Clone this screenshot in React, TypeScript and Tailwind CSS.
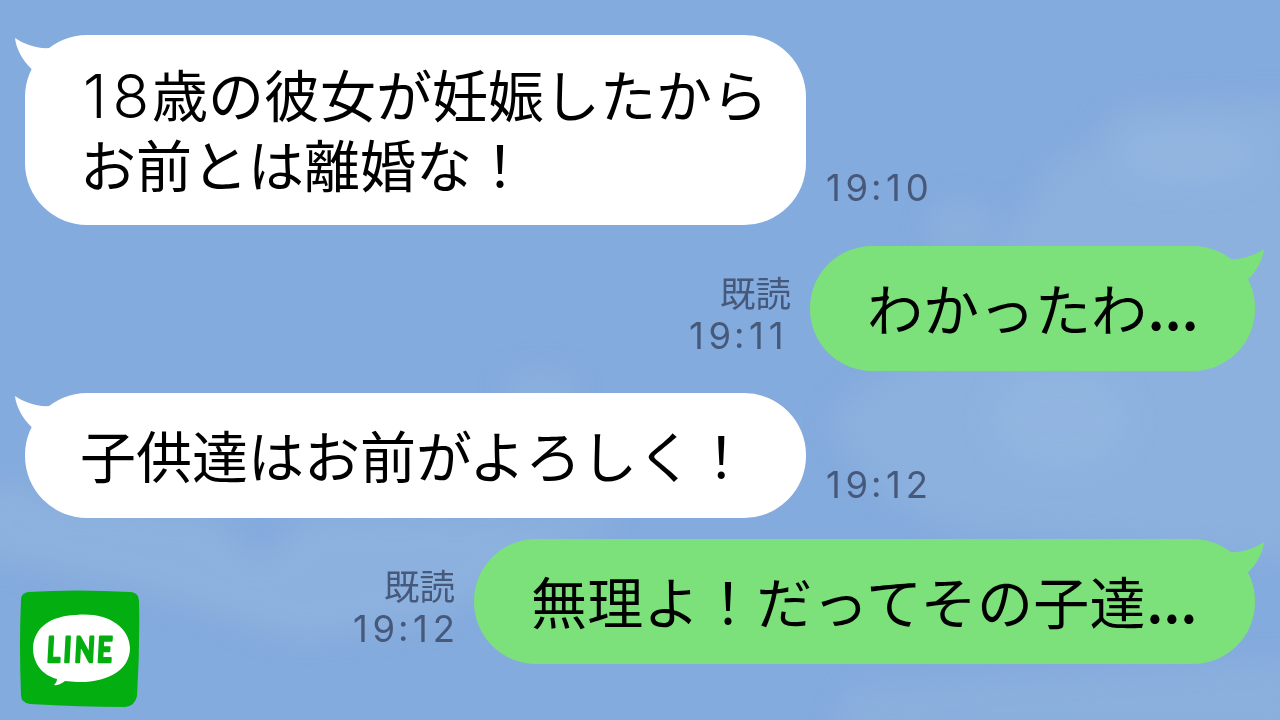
type Message = {
  mine?: boolean
  lines: string[]
  time: string
  size: string
  meta: string
}

const messages: Message[] = [
  {
    lines: ['18歳の彼女が妊娠したから', 'お前とは離婚な！'],
    time: '19:10',
    size: 'w-[781px] h-[190px]',
    meta: 'ml-5 pb-4',
  },
  {
    mine: true,
    lines: ['わかったわ...'],
    time: '19:11',
    size: 'mt-[21px] w-[445px] h-[125px]',
    meta: 'mr-[19px] items-end pb-[14px]',
  },
  {
    lines: ['子供達はお前がよろしく！'],
    time: '19:12',
    size: 'mt-[22px] w-[781px] h-[125px]',
    meta: 'ml-5 pb-3',
  },
  {
    mine: true,
    lines: ['無理よ！だってその子達...'],
    time: '19:12',
    size: 'mt-[21px] w-[781px] h-[125px] tracking-[0.3px]',
    meta: 'mr-[19px] items-end pb-[14px]',
  },
]

function Clouds() {
  return (
    <svg className="absolute inset-0" width="1280" height="720" viewBox="0 0 1280 720">
      <defs>
        <filter id="soft" x="-30%" y="-30%" width="160%" height="160%">
          <feGaussianBlur stdDeviation="14" />
        </filter>
      </defs>
      <g fill="#9bbce2" filter="url(#soft)">
        <path
          opacity=".35"
          d="M1300 100 L1130 105 Q1100 120 1095 145 Q1040 160 1035 200 Q1010 215 1000 250 L980 330 Q850 380 830 420 Q860 500 960 530 L1300 560Z"
        />
        <ellipse opacity=".35" cx="960" cy="228" rx="32" ry="25" />
        <ellipse opacity=".3" cx="540" cy="390" rx="36" ry="20" />
        <ellipse opacity=".4" cx="1190" cy="155" rx="70" ry="30" />
        <ellipse opacity=".35" cx="1060" cy="420" rx="70" ry="50" />
        <path
          opacity=".4"
          d="M-20 490 Q20 470 50 500 L210 515 L260 560 L310 515 L620 520 L430 620 L300 640 L140 590 L-20 555Z"
        />
        <path opacity=".3" d="M850 690 L1300 660 L1300 740 L830 740Z" />
      </g>
    </svg>
  )
}

function Tail({ mine }: { mine?: boolean }) {
  return (
    <svg
      className={
        mine
          ? 'absolute -top-px -right-[9px] -scale-x-100 text-[#7ce17a]'
          : 'absolute -top-px -left-[10px] text-white'
      }
      width="60"
      height="60"
      viewBox="0 0 60 60"
      fill="currentColor"
    >
      <path d="M0 4 C9 10 21 15 35 14 L50 25 L30 50 L17 35.500 C7 26 1 14 0 4Z" />
    </svg>
  )
}

// digits and the trailing dots are set wider than the kana
function Line({ text }: { text: string }) {
  return (
    <p className="relative -top-[2px]">
      {text.split(/(\d+|\.\.\.)/).map((part, i) => {
        if (part === '...') {
          return (
            <span key={i} className="relative -top-px ml-px text-[50px] leading-[50px] font-bold tracking-[0.7px]">
              {part}
            </span>
          )
        }
        if (/^\d+$/.test(part)) {
          return (
            <span
              key={i}
              className="relative top-px inline-block w-[72px] pl-[3px] font-['Inter',sans-serif] text-[60px] leading-[60px] font-[350] tracking-[6px]"
            >
              {part}
            </span>
          )
        }
        return part
      })}
    </p>
  )
}

function Bubble({ message }: { message: Message }) {
  const { mine, lines, size } = message
  return (
    <div
      className={`relative flex shrink-0 flex-col justify-center rounded-[62px] text-[56px] leading-[70px] whitespace-nowrap text-black ${size} ${
        mine ? 'bg-[#7ce17a] pl-[57px]' : 'bg-white pl-[55px]'
      }`}
    >
      <Tail mine={mine} />
      {lines.map((line) => (
        <Line key={line} text={line} />
      ))}
    </div>
  )
}

function Meta({ message }: { message: Message }) {
  const [hour, minute] = message.time.split(':')
  return (
    <div className={`flex flex-col text-[#47597b] ${message.meta}`}>
      {message.mine && <span className="mb-[2px] text-[35.500px] leading-[42px]">既読</span>}
      <span className="w-[102px] font-['Inter','Noto_Sans_CJK_JP',sans-serif] text-[36.500px] leading-[42px] tracking-[4.700px] whitespace-nowrap">
        {hour}
        <span className="relative -top-px -ml-[2px]">:</span>
        {minute}
      </span>
    </div>
  )
}

function LineLogo() {
  return (
    <svg className="absolute bottom-3 left-5" width="120" height="118" viewBox="0 0 120 118">
      <path
        fill="#03ae10"
        d="M8 2 Q55 -1 111 2 Q119 3 119 11 Q120 58 117 106 Q115 116 105 117 Q60 117 10 114 Q1 113 1 105 Q-1 55 1 10 Q1 3 8 2Z"
      />
      <path
        fill="#fff"
        d="M56 25 C85 22 109 35 110 58 C110 81 86 93 57 92 L45 91 C42 93 38 96 34 95 C36 93 37 91 37 89 C21 85 13 72 13 58 C14 37 31 26 56 25Z"
      />
      <text
        x="36 58.500 73 103"
        y="72"
        transform="translate(3 0) skewX(-3) scale(0.75 1)"
        fill="#03ae10"
        stroke="#03ae10"
        strokeWidth="2.500"
        strokeLinejoin="round"
        className="font-['Lato',sans-serif] text-[35px] font-bold"
      >
        LINE
      </text>
    </svg>
  )
}

export default function App() {
  return (
    <main className="relative h-[720px] w-[1280px] overflow-hidden bg-[#84abdd] font-['Noto_Sans_CJK_JP',sans-serif]">
      <Clouds />
      <div className="relative flex flex-col px-[25px] pt-[35px]">
        {messages.map((message, i) => (
          <div key={i} className={message.mine ? 'flex flex-row-reverse items-end' : 'flex items-end'}>
            <Bubble message={message} />
            <Meta message={message} />
          </div>
        ))}
      </div>
      <LineLogo />
    </main>
  )
}
